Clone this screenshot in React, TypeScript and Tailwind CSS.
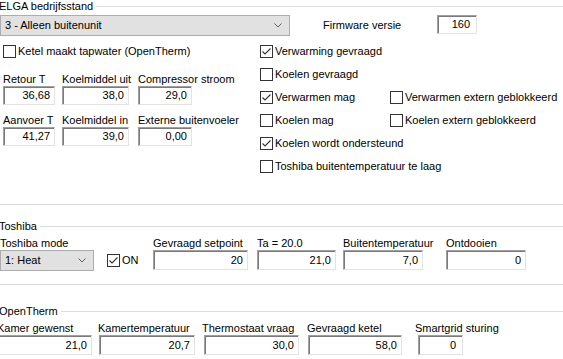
import React from "react";

function Check({ checked }: { checked?: boolean }) {
  return (
    <div className="w-[13px] h-[13px] border border-[#333333] bg-white flex items-center justify-center shrink-0">
      {checked && (
        <svg width="11" height="11" viewBox="0 0 11 11">
          <polyline points="1.5,5.5 4,8 9.5,2.5" fill="none" stroke="#333333" strokeWidth="1.1" />
        </svg>
      )}
    </div>
  );
}

function CheckRow({ checked, label, className = "" }: { checked?: boolean; label: string; className?: string }) {
  return (
    <div className={`flex items-center h-[13px] ${className}`}>
      <Check checked={checked} />
      <span className="ml-[2px] whitespace-nowrap leading-[13px]">{label}</span>
    </div>
  );
}

function TextBox({ value, className = "" }: { value: string; className?: string }) {
  return (
    <div
      className={`bg-white border border-t-[#a0a0a0] border-l-[#a0a0a0] border-r-[#e3e3e3] border-b-[#e3e3e3] shadow-[inset_1px_1px_0_#7a7a7a] flex items-center justify-end leading-none whitespace-nowrap ${className}`}
    >
      {value}
    </div>
  );
}

function Combo({ value, className = "" }: { value: string; className?: string }) {
  return (
    <div className={`h-[21px] bg-[#e1e1e1] border border-[#adadad] flex items-center justify-between pl-[4px] pr-[7px] shrink-0 ${className}`}>
      <span className="whitespace-nowrap">{value}</span>
      <svg width="8" height="5" viewBox="0 0 8 5">
        <polyline points="0.5,0.5 4,4 7.5,0.5" fill="none" stroke="#606060" strokeWidth="1" />
      </svg>
    </div>
  );
}

function Label({ text, className = "" }: { text: string; className?: string }) {
  return <div className={`h-[14px] leading-[14px] whitespace-nowrap ${className}`}>{text}</div>;
}

function Line() {
  return <div className="h-px bg-[#dcdcdc] shrink-0" />;
}

function Title({ text, className = "" }: { text: string; className?: string }) {
  return (
    <div className={`h-[13px] flex items-center shrink-0 ${className}`}>
      <span className="-ml-[1px] whitespace-nowrap leading-[13px]">{text}</span>
      <div className="flex-1 h-px bg-[#dcdcdc] ml-[3px]" />
    </div>
  );
}

export default function App() {
  return (
    <div className="w-[563px] h-[359px] overflow-hidden bg-white text-black text-[11px] font-['Liberation_Sans',Arial,sans-serif] flex flex-col">
      {/* ELGA */}
      <div className="h-[204px] flex flex-col shrink-0">
        <Title text="ELGA bedrijfsstand" />
        <div className="mt-[2px] flex items-start h-[21px]">
          <Combo className="w-[290px]" value="3 - Alleen buitenunit" />
          <span className="ml-[33px] w-[114px] leading-[21px] whitespace-nowrap">Firmware versie</span>
          <TextBox className="w-[40px] h-[19px] pr-[6px]" value="160" />
        </div>
        <div className="flex">
          <div className="w-[260px] flex flex-col shrink-0">
            <CheckRow className="mt-[9px] ml-[3px]" label="Ketel maakt tapwater (OpenTherm)" />
            <div className="mt-[14px] flex">
              <div className="w-[52px] ml-[3px] flex flex-col shrink-0">
                <Label text="Retour T" />
                <TextBox className="h-[19px] pr-[4px]" value="36,68" />
              </div>
              <div className="w-[67px] ml-[7px] flex flex-col shrink-0">
                <Label text="Koelmiddel uit" />
                <TextBox className="h-[19px] pr-[4px]" value="38,0" />
              </div>
              <div className="w-[54px] ml-[9px] flex flex-col shrink-0">
                <Label text="Compressor stroom" />
                <TextBox className="h-[19px] pr-[4px]" value="29,0" />
              </div>
            </div>
            <div className="mt-[8px] flex">
              <div className="w-[52px] ml-[3px] flex flex-col shrink-0">
                <Label text="Aanvoer T" />
                <TextBox className="h-[19px] pr-[4px]" value="41,27" />
              </div>
              <div className="w-[67px] ml-[7px] flex flex-col shrink-0">
                <Label text="Koelmiddel in" />
                <TextBox className="h-[19px] pr-[4px]" value="39,0" />
              </div>
              <div className="w-[54px] ml-[9px] flex flex-col shrink-0">
                <Label text="Externe buitenvoeler" />
                <TextBox className="h-[19px] pr-[4px]" value="0,00" />
              </div>
            </div>
          </div>
          <div className="flex flex-col gap-[10px] mt-[9px]">
            <CheckRow checked label="Verwarming gevraagd" />
            <CheckRow label="Koelen gevraagd" />
            <div className="flex">
              <CheckRow className="w-[130px]" checked label="Verwarmen mag" />
              <CheckRow label="Verwarmen extern geblokkeerd" />
            </div>
            <div className="flex">
              <CheckRow className="w-[130px]" label="Koelen mag" />
              <CheckRow label="Koelen extern geblokkeerd" />
            </div>
            <CheckRow checked label="Koelen wordt ondersteund" />
            <CheckRow label="Toshiba buitentemperatuur te laag" />
          </div>
        </div>
      </div>
      <Line />

      {/* Toshiba */}
      <div className="h-[79px] flex flex-col shrink-0">
        <Title className="mt-[15px]" text="Toshiba" />
        <div className="mt-[3px] flex items-start">
          <div className="w-[94px] flex flex-col shrink-0">
            <Label text="Toshiba mode" />
            <Combo className="w-full" value="1: Heat" />
          </div>
          <div className="ml-[13px] w-[46px] mt-[14px] h-[21px] flex items-center shrink-0">
            <Check checked />
            <span className="ml-[2px] leading-[13px]">ON</span>
          </div>
          <div className="w-[95px] flex flex-col shrink-0">
            <Label text="Gevraagd setpoint" />
            <TextBox className="h-[20px] pr-[4px]" value="20" />
          </div>
          <div className="w-[79px] ml-[9px] flex flex-col shrink-0">
            <Label text="Ta = 20.0" />
            <TextBox className="h-[20px] pr-[4px]" value="21,0" />
          </div>
          <div className="w-[80px] ml-[7px] flex flex-col shrink-0">
            <Label text="Buitentemperatuur" />
            <TextBox className="h-[20px] pr-[4px]" value="7,0" />
          </div>
          <div className="w-[80px] ml-[23px] flex flex-col shrink-0">
            <Label text="Ontdooien" />
            <TextBox className="h-[20px] pr-[4px]" value="0" />
          </div>
        </div>
      </div>
      <Line />

      {/* OpenTherm */}
      <Title className="mt-[20px]" text="OpenTherm" />
      <div className="mt-[3px] flex items-start">
        <div className="w-[95px] -ml-[3px] flex flex-col shrink-0">
          <Label text="Kamer gewenst" />
          <TextBox className="h-[20px] pr-[4px]" value="21,0" />
        </div>
        <div className="w-[96px] ml-[7px] flex flex-col shrink-0">
          <Label className="-ml-[1px]" text="Kamertemperatuur" />
          <TextBox className="h-[20px] pr-[4px]" value="20,7" />
        </div>
        <div className="w-[95px] ml-[9px] flex flex-col shrink-0">
          <Label className="-ml-[2px]" text="Thermostaat vraag" />
          <TextBox className="h-[20px] pr-[4px]" value="30,0" />
        </div>
        <div className="w-[94px] ml-[9px] flex flex-col shrink-0">
          <Label className="-ml-[1px]" text="Gevraagd ketel" />
          <TextBox className="h-[20px] pr-[4px]" value="58,0" />
        </div>
        <div className="w-[45px] ml-[16px] flex flex-col shrink-0">
          <Label className="-ml-[3px]" text="Smartgrid sturing" />
          <TextBox className="h-[20px] pr-[6px]" value="0" />
        </div>
      </div>
    </div>
  );
}
